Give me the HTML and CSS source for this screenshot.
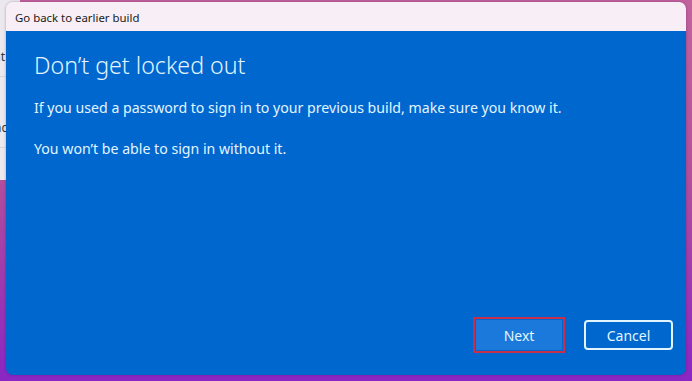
FILE: index.html
```html
<!DOCTYPE html>
<html lang="en">
<head>
<meta charset="utf-8">
<title>Go back to earlier build</title>
<link rel="stylesheet" href="styles.css">
</head>
<body>
<div class="desktop">
  <div class="behind-window">
    <div class="bw-row"><span>at</span></div>
    <div class="bw-row"><span>nc</span></div>
  </div>
  <div class="dialog">
    <div class="titlebar">Go back to earlier build</div>
    <div class="content">
      <div class="main">
        <h1 class="heading">Don’t get locked out</h1>
        <p class="text">If you used a password to sign in to your previous build, make sure you know it.</p>
        <p class="text">You won’t be able to sign in without it.</p>
      </div>
      <div class="actions">
        <div class="focus-ring"><button class="btn btn-next">Next</button></div>
        <button class="btn btn-cancel">Cancel</button>
      </div>
    </div>
  </div>
</div>
</body>
</html>
```

FILE: styles.css
```css
html, body {
  margin: 0;
  padding: 0;
}
body {
  width: 692px;
  height: 381px;
  overflow: hidden;
  font-family: "Noto Sans", "Open Sans", sans-serif;
}
.desktop {
  position: relative;
  width: 692px;
  height: 381px;
  box-sizing: border-box;
  padding: 2px 6px 6px 6px;
  background: linear-gradient(180deg, #c2639e 0%, #b4509a 45%, #9a34b4 80%, #8a26c4 100%);
}
.behind-window {
  position: absolute;
  left: 0;
  top: 0;
  width: 20px;
  height: 180px;
  background: #ebe9ee;
  display: flex;
  flex-direction: column;
  padding-top: 36px;
  box-sizing: border-box;
}
.bw-row {
  height: 40px;
  border-bottom: 1px solid #d8d6dc;
  display: flex;
  align-items: center;
  font-size: 12px;
  color: #333;
  margin-bottom: 30px;
}
.bw-row span {
  margin-left: -6px;
}
.dialog {
  position: relative;
  height: 100%;
  display: flex;
  flex-direction: column;
  border-radius: 7px;
  overflow: hidden;
  box-shadow: 0 0 3px rgba(60, 0, 80, 0.35);
}
.titlebar {
  height: 29px;
  flex: none;
  background: #f7eff5;
  color: #1a1a1a;
  font-size: 11.4px;
  display: flex;
  align-items: center;
  padding-left: 9px;
  padding-top: 1px;
  box-sizing: border-box;
}
.content {
  flex: 1;
  background: #0067cf;
  display: flex;
  flex-direction: column;
  padding: 19px 13px 22px 28px;
}
.main {
  flex: 1;
}
.heading {
  margin: 0 0 17px 0;
  font-weight: 300;
  font-size: 23.2px;
  line-height: 31px;
  color: #e2f5ff;
}
.text {
  margin: 0 0 21px 0;
  font-size: 14.15px;
  line-height: 20px;
  color: #e2f5ff;
}
.actions {
  display: flex;
  justify-content: flex-end;
  align-items: center;
  gap: 19px;
}
.focus-ring {
  border: 2px solid #c7304a;
  padding: 1px;
}
.btn {
  font-family: inherit;
  font-size: 14px;
  color: #e2f5ff;
  height: 30px;
  box-sizing: border-box;
  border-radius: 4px;
  cursor: pointer;
}
.btn-next {
  width: 86px;
  background: #1a79da;
  border: none;
  border-radius: 0;
}
.btn-cancel {
  width: 89px;
  background: #0067cf;
  border: 2px solid #e2f5ff;
}
```
